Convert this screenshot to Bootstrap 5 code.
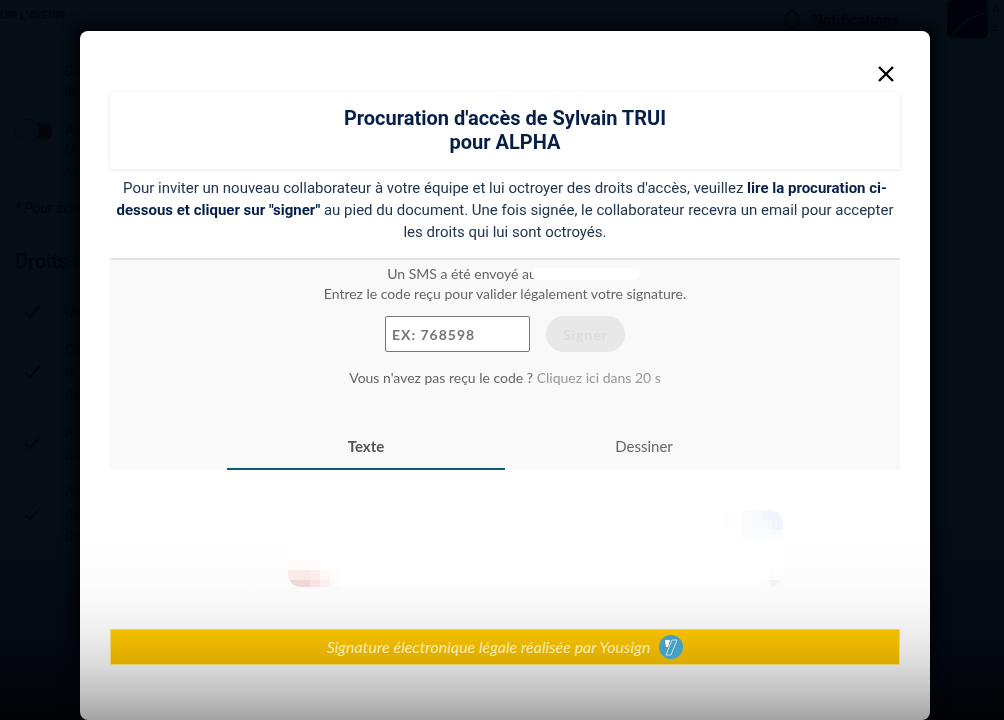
<!DOCTYPE html>
<html lang="fr">
<head>
<meta charset="utf-8">
<meta name="viewport" content="width=device-width, initial-scale=1">
<title>Procuration d'accès</title>
<link href="https://cdn.jsdelivr.net/npm/bootstrap@5.3.0/dist/css/bootstrap.min.css" rel="stylesheet">
<style>
  body { background: #050d15; color: #01060d; font-family: Roboto, "Noto Sans", sans-serif; overflow: hidden; }
  .backpage { min-height: 100vh; background: linear-gradient(to top, #020306, #040912 80px, #050d15 200px); }
  .topline { height: 40px; }
  .slogan { font: bold 10px/32px "Liberation Sans", sans-serif; }
  .avatar { width: 41px; height: 38px; border-radius: 5px; background: #01030c; }
  .who { width: 12px; font-size: 12px; line-height: 18px; overflow: hidden; }
  .notif { font-size: 15px; line-height: 24px; }
  .intro { font-size: 14px; line-height: 20px; padding: 21px 0 0 64px; }
  .opt { padding: 18px 0 0 15px; }
  .opt-text { font-size: 14px; line-height: 21px; }
  .toggler.form-check-input { width: 37px; height: 24px; margin: 0 13px 0 0; border: 0; border-radius: 12px; opacity: 1;
    background: radial-gradient(circle at 12px 12px, #050c13 11px, #02070d 12px, transparent 12px), linear-gradient(#02050a, #02050a) right center / 24px 16px no-repeat; }
  .note { font-size: 14px; line-height: 20px; padding: 16px 0 0 15px; }
  .rights-title { font-size: 20px; line-height: 28px; padding: 29px 0 0 15px; margin: 0 0 26px; }
  .rights li { font-size: 14px; line-height: 22px; gap: 24px; padding-left: 24px; margin-bottom: 16px; }
  .rights svg { stroke: #02070d; }
  .veil { background: none; overflow: hidden; }
  .sheet { max-width: none; margin: 31px 74px 0 80px; }
  .panel { min-height: calc(100vh - 31px); border: 0; border-radius: 8px; padding: 29px 30px 30px;
    background: linear-gradient(to top, #a3a3a3, #c0c0c0 25px, #dcdcdc 56px, #eeeeee 88px, #f7f7f7 110px, #fbfbfb 135px, #fff 180px);
    box-shadow: 0 0 14px 6px #020509; }
  .closer { width: 28px; height: 28px; line-height: 0; }
  .heading { font-size: 20px; line-height: 24px; font-weight: 700; color: #051f48; padding: 14px 0 15px; margin: 4px 0 8px; box-shadow: 0 1px 4px #0000001a; }
  .explain { font-size: 15px; line-height: 22px; color: #213650; margin: 0 0 15px; }
  .explain span { white-space: nowrap; }
  .explain strong { color: #051f48; }
  .signing { background: #f9f9f9; border-top: 2px solid #e4e4e4; font-family: Lato, sans-serif; color: #666; font-size: 14px; line-height: 20px; padding-top: 4px; }
  .sms { padding-left: 16px; }
  .hidden-phone { width: 107px; height: 12px; border-radius: 6px; background: #fff; margin-left: -5px; z-index: 1; }
  .code-input.form-control { width: 145px; height: 36px; border: 1px solid #777; border-radius: 2px; padding: 0 6px; font: bold 14px Lato, sans-serif; letter-spacing: 1px; }
  .code-input::placeholder { color: #777; opacity: 1; }
  .sign-btn.btn { width: 79px; height: 36px; border: 0; border-radius: 18px; background: #e8e8e8; color: #dedede; font: bold 14px Lato, sans-serif; letter-spacing: 1px; opacity: 1; padding: 0; }
  .later { color: #999; text-decoration: none; }
  .tabs { margin: 35px 117px 0; }
  .tabs .nav-link { height: 47px; border-radius: 0; border-bottom: 2px solid transparent; color: #666; font-size: 15px; line-height: 20px; padding: 13px 0; }
  .tabs .nav-link.active { border-color: #0b5a78; color: #555; background: none; font-weight: 700; }
  .preview { width: 495px; height: 77px; margin: 40px 117px 42px auto; border-radius: 13px; background: #fff; overflow: hidden; }
  .preview svg { display: block; width: 100%; height: 100%; }
  .legal { height: 36px; border: 1px solid #e5d36b; background: linear-gradient(#f3bf00, #dcaa00); color: #f5e9b4; font: italic 16px/32px Lato, sans-serif; gap: 9px; }
</style>
</head>
<body>
<main class="backpage" aria-hidden="true">
  <div class="topline d-flex align-items-start">
    <span class="slogan">UIR L'AVENIR</span>
    <svg class="ms-auto mt-2" width="24" height="24" fill="none" stroke="#01050b" stroke-width="2" aria-hidden="true"><path d="M4 18h16l-2-3V10a6 6 0 0 0-12 0v5zM10 19q2 4 4 0M12 2v2"/></svg>
    <strong class="notif ms-2 mt-2 me-5">Notifications</strong>
    <svg class="avatar" viewBox="0 0 41 38" aria-hidden="true"><path d="M6 36Q15 17 41 13" fill="none" stroke="#08101c"/></svg>
    <span class="who ms-1">A E</span>
  </div>
  <p class="intro fst-italic mb-0">Co<br>de</p>
  <div class="opt d-flex align-items-start">
    <input class="toggler form-check-input" type="checkbox" role="switch" disabled aria-label="Activer">
    <div class="opt-text">Ac<br><em>Un<br>né</em></div>
  </div>
  <p class="note fst-italic mb-0">* Pour activ</p>
  <h2 class="rights-title">Droits i</h2>
  <ul class="rights list-unstyled">
    <li class="d-flex align-items-center"><svg width="17" height="14" fill="none" stroke-width="2"><path d="m1 8 5 4L16 1"/></svg><span>Ut</span></li>
    <li class="d-flex align-items-center"><svg width="17" height="14" fill="none" stroke-width="2"><path d="m1 8 5 4L16 1"/></svg><span>Ce<br>re<br>de</span></li>
    <li class="d-flex align-items-center"><svg width="17" height="14" fill="none" stroke-width="2"><path d="m1 8 5 4L16 1"/></svg><span>Ac<br>Bu</span></li>
    <li class="d-flex align-items-center"><svg width="17" height="14" fill="none" stroke-width="2"><path d="m1 8 5 4L16 1"/></svg><span>Ac<br>de<br>do</span></li>
  </ul>
</main>

<div class="modal veil d-block" role="dialog" aria-modal="true" aria-labelledby="sheetTitle">
  <div class="modal-dialog sheet">
    <div class="modal-content panel">
      <button type="button" class="closer btn p-0 border-0 ms-auto" aria-label="Fermer">
        <svg width="28" height="28" fill="none" stroke="#000" stroke-width="2.4"><path d="m7 7 14 14M21 7 7 21"/></svg>
      </button>
      <h1 id="sheetTitle" class="heading text-center">Procuration d'accès de Sylvain TRUI<br>pour ALPHA</h1>
      <p class="explain text-center">
        <span>Pour inviter un nouveau collaborateur à votre équipe et lui octroyer des droits d'accès, veuillez <strong>lire la procuration ci-</strong></span><br>
        <span><strong>dessous et cliquer sur "signer"</strong> au pied du document. Une fois signée, le collaborateur recevra un email pour accepter</span><br>
        <span>les droits qui lui sont octroyés.</span>
      </p>
      <section class="signing text-center">
        <div class="sms d-flex justify-content-center align-items-center"><span>Un SMS a été envoyé au</span><span class="hidden-phone"></span></div>
        <label class="d-block" for="code">Entrez le code reçu pour valider légalement votre signature.</label>
        <form class="d-flex justify-content-center gap-3 mt-2 pt-1">
          <input id="code" class="code-input form-control" type="text" placeholder="EX: 768598">
          <button type="button" class="sign-btn btn" disabled>Signer</button>
        </form>
        <p class="mt-3 mb-0">Vous n'avez pas reçu le code ? <a class="later" href="#">Cliquez ici dans 20 s</a></p>
        <nav class="tabs nav nav-justified">
          <a class="nav-link active" href="#">Texte</a>
          <a class="nav-link" href="#">Dessiner</a>
        </nav>
      </section>
      <div class="preview">
        <svg viewBox="0 0 495 77" aria-hidden="true" shape-rendering="crispEdges">
          <path d="M0 60h22v10H0z" fill="#f9eae9"/><path d="M22 60h10v10H22z" fill="#fdecee"/><path d="M32 60h10v10H32z" fill="#fff7f6"/>
          <path d="M0 70h22v7H0z" fill="#efd8d7"/><path d="M22 70h10v7H22z" fill="#f8e2e3"/><path d="M32 70h10v7H32z" fill="#fdeff0"/><path d="M0 50h32v10H0zM42 60h10v17H42z" fill="#fffcfb"/>
          <path d="M435 0h19v20h-19z" fill="#fefefe"/><path d="M454 0h10v30h-10z" fill="#fbfbfe"/><path d="M464 0h10v20h-10z" fill="#f8f9fd"/><path d="M474 0h10v10h-10z" fill="#f6f4fb"/><path d="M484 0h11v20h-11z" fill="#f1f6fc"/><path d="M474 10h10v10h-10z" fill="#f7fafd"/><path d="M464 20h31v10h-31z" fill="#fafcff"/>
          <path d="M482 70h13v7h-13z" fill="#f2f4f5"/><path d="M472 70h10v7h-10z" fill="#fafcfb"/><path d="M482 60h13v10h-13z" fill="#fcfcfc"/>
        </svg>
      </div>
      <footer class="legal d-flex justify-content-center align-items-center">
        <span>Signature électronique légale réalisée par Yousign</span>
        <svg width="24" height="24" viewBox="0 0 24 24" aria-hidden="true"><circle cx="12" cy="12" r="12" fill="#479fc1"/><path d="M6 5h5l-2 7H7z" fill="#fff"/><path d="M13 5h5l-6 15H7z" fill="none" stroke="#c5e5ee"/></svg>
      </footer>
    </div>
  </div>
</div>
<script src="https://cdn.jsdelivr.net/npm/bootstrap@5.3.0/dist/js/bootstrap.bundle.min.js"></script>
</body>
</html>
